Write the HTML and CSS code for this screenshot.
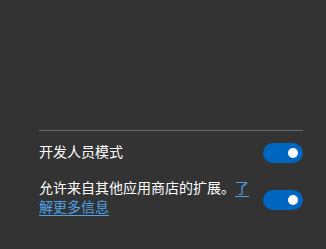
FILE: index.html
```html
<!DOCTYPE html>
<html lang="zh-CN">
<head>
<meta charset="utf-8">
<link rel="stylesheet" href="styles.css">
</head>
<body>
<div class="panel">
  <div class="row row-first">
    <div class="label">开发人员模式</div>
    <div class="toggle toggle-first"><span class="knob"></span></div>
  </div>
  <div class="row row-second">
    <div class="label label-multi">允许来自其他应用商店的扩展。<a class="link" href="#">了解更多信息</a></div>
    <div class="toggle toggle-second"><span class="knob"></span></div>
  </div>
</div>
</body>
</html>
```
FILE: styles.css
```css
html, body {
  margin: 0;
  padding: 0;
  background: #333333;
  width: 326px;
  height: 249px;
  overflow: hidden;
}
body {
  font-family: "Noto Sans CJK SC", "Noto Sans", sans-serif;
  font-size: 14px;
  color: #ffffff;
}
.panel {
  margin: 130px 23px 0 39px;
  border-top: 1px solid #6b6b6b;
  display: flex;
  flex-direction: column;
}
.row {
  display: flex;
  align-items: flex-start;
  gap: 12px;
}
.row-first {
  padding-top: 10px;
}
.row-second {
  margin-top: 15px;
}
.label {
  flex: 1;
  line-height: 20px;
}
.label-multi {
  line-height: 19px;
}
.link {
  color: #4ea2e6;
  text-decoration: underline;
  text-underline-offset: 3px;
}
.toggle {
  width: 40px;
  height: 20px;
  border-radius: 10px;
  background: #0067c0;
  display: flex;
  align-items: center;
  justify-content: flex-end;
  padding-right: 5px;
  box-sizing: border-box;
  flex: none;
}
.toggle-first {
  margin-top: 2px;
}
.toggle-second {
  margin-top: 12px;
}
.knob {
  width: 10px;
  height: 10px;
  border-radius: 50%;
  background: #ffffff;
}
```
